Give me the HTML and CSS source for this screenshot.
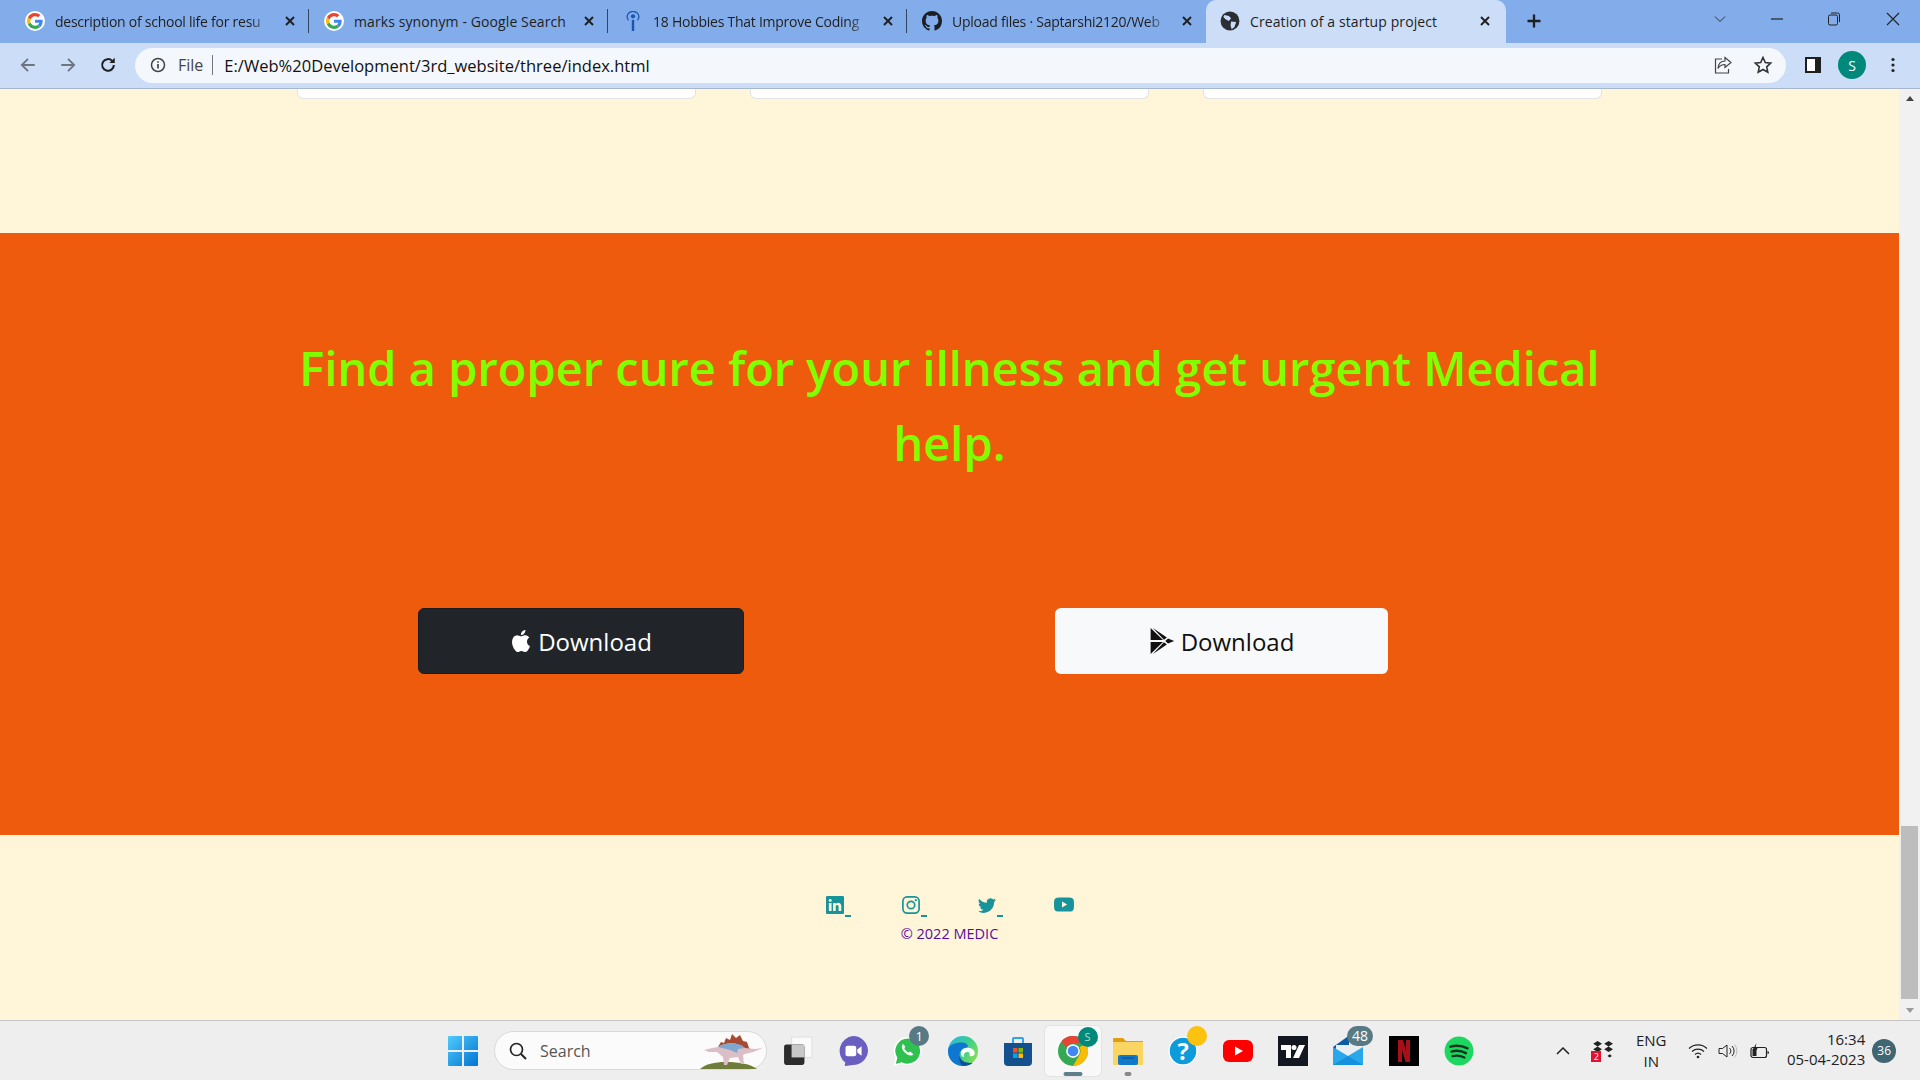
FILE: index.html
```html
<!DOCTYPE html>
<html lang="en">
<head>
  <meta charset="UTF-8">
  <title>Creation of a startup project</title>
  <link rel="stylesheet" href="styles.css">
</head>
<body>
  <svg class="defs" width="0" height="0">
    <symbol id="g-logo" viewBox="-6 -6 60 60">
      <circle cx="24" cy="24" r="30" fill="#fff"/>
      <path fill="#ea4335" d="M24 9.5c3.54 0 6.71 1.22 9.21 3.6l6.85-6.85C35.9 2.38 30.47 0 24 0 14.62 0 6.51 5.38 2.56 13.22l7.98 6.19C12.43 13.72 17.74 9.5 24 9.5z"/>
      <path fill="#4285f4" d="M46.98 24.55c0-1.57-.15-3.09-.38-4.55H24v9.02h12.94c-.58 2.96-2.26 5.48-4.78 7.18l7.73 6c4.51-4.18 7.09-10.36 7.09-17.65z"/>
      <path fill="#fbbc05" d="M10.53 28.59c-.48-1.45-.76-2.99-.76-4.59s.27-3.14.76-4.59l-7.98-6.19C.92 16.46 0 20.12 0 24c0 3.88.92 7.54 2.56 10.78l7.97-6.19z"/>
      <path fill="#34a853" d="M24 48c6.48 0 11.93-2.13 15.89-5.81l-7.73-6c-2.15 1.45-4.92 2.3-8.16 2.3-6.26 0-11.57-4.22-13.47-9.91l-7.98 6.19C6.51 42.62 14.62 48 24 48z"/>
    </symbol>
    <symbol id="x-icon" viewBox="0 0 12 12">
      <path d="M2 2l8 8M10 2l-8 8" stroke="#1f1f1f" stroke-width="1.9" fill="none"/>
    </symbol>
  </svg>

  <div class="tabstrip">
    <div class="tab">
      <svg class="favicon"><use href="#g-logo"/></svg>
      <span class="tab-title">description of school life for resu</span>
      <svg class="tab-close"><use href="#x-icon"/></svg>
    </div>
    <div class="tab">
      <svg class="favicon"><use href="#g-logo"/></svg>
      <span class="tab-title tab-title-full">marks synonym - Google Search</span>
      <svg class="tab-close"><use href="#x-icon"/></svg>
    </div>
    <div class="tab">
      <svg class="favicon" viewBox="0 0 18 18">
        <circle cx="9" cy="4.800" r="1.900" fill="#1a56b0"/>
        <path d="M7.900 8h2.200v10H7.900z" fill="#1a56b0"/>
        <path d="M5 8.500a5.200 5.200 0 0 1 0-6.500M13 8.500a5.200 5.200 0 0 0 0-6.500M5 2a5.500 5.500 0 0 1 8 0" stroke="#1a56b0" stroke-width="1.100" fill="none"/>
      </svg>
      <span class="tab-title">18 Hobbies That Improve Coding</span>
      <svg class="tab-close"><use href="#x-icon"/></svg>
    </div>
    <div class="tab">
      <svg class="favicon" viewBox="0 0 16 16">
        <path fill="#1b1f24" d="M8 0C3.58 0 0 3.58 0 8c0 3.54 2.29 6.53 5.47 7.59.4.07.55-.17.55-.38 0-.19-.01-.82-.01-1.49-2.01.37-2.53-.49-2.69-.94-.09-.23-.48-.94-.82-1.13-.28-.15-.68-.52-.01-.53.63-.01 1.08.58 1.23.82.72 1.21 1.87.87 2.33.66.07-.52.28-.87.51-1.07-1.78-.2-3.64-.89-3.64-3.95 0-.87.31-1.59.82-2.15-.08-.2-.36-1.02.08-2.12 0 0 .67-.21 2.2.82.64-.18 1.32-.27 2-.27.68 0 1.36.09 2 .27 1.53-1.04 2.2-.82 2.2-.82.44 1.1.16 1.92.08 2.12.51.56.82 1.27.82 2.15 0 3.07-1.87 3.75-3.65 3.95.29.25.54.73.54 1.48 0 1.07-.01 1.93-.01 2.2 0 .21.15.46.55.38A8.013 8.013 0 0016 8c0-4.42-3.58-8-8-8z"/>
      </svg>
      <span class="tab-title">Upload files · Saptarshi2120/Web</span>
      <svg class="tab-close"><use href="#x-icon"/></svg>
    </div>
    <div class="tab tab-active">
      <svg class="favicon" viewBox="0 0 18 18">
        <circle cx="9" cy="9" r="8.500" fill="#2b2f33"/>
        <path d="M4 3.500l4 1 2 2-2 2.500-3-1.500-2-2zM10 9.500l4.500.5-1.500 4.500-2.500 2-1-3.500z" fill="#cbddf7"/>
      </svg>
      <span class="tab-title tab-title-full">Creation of a startup project</span>
      <svg class="tab-close"><use href="#x-icon"/></svg>
    </div>
    <svg class="new-tab" viewBox="0 0 16 16"><path d="M8 1.500v13M1.500 8h13" stroke="#1f1f1f" stroke-width="2.300"/></svg>
    <div class="window-controls">
      <svg viewBox="0 0 14 14"><path d="M2 4.500l5 5 5-5" stroke="#333" fill="none"/></svg>
      <svg viewBox="0 0 14 14"><path d="M1 7h12" stroke="#222" stroke-width="1.200"/></svg>
      <svg viewBox="0 0 14 14"><rect x="1.500" y="3" width="9" height="10" rx="1.500" stroke="#222" fill="none"/><path d="M4 1h6.500a2 2 0 0 1 2 2v7" stroke="#222" fill="none"/></svg>
      <svg viewBox="0 0 14 14"><path d="M1 1l12 12M13 1L1 13" stroke="#222" stroke-width="1.100"/></svg>
    </div>
  </div>

  <div class="toolbar">
    <svg class="nav-icon" viewBox="0 0 16 16"><path d="M14 8H2.500M8 2.500L2.500 8 8 13.500" stroke="#6e7580" stroke-width="1.600" fill="none"/></svg>
    <svg class="nav-icon" viewBox="0 0 16 16"><path d="M2 8h11.500M8 2.500L13.500 8 8 13.500" stroke="#6e7580" stroke-width="1.600" fill="none"/></svg>
    <svg class="nav-icon" viewBox="0 0 16 16"><path d="M13.200 8a5.200 5.200 0 1 1-1.500-3.700" stroke="#1f1f1f" stroke-width="1.800" fill="none"/><path d="M14 1.500v4.800H9.200z" fill="#1f1f1f"/></svg>
    <div class="omnibox">
      <svg class="info-icon" viewBox="0 0 16 16"><circle cx="8" cy="8" r="6.500" stroke="#444" stroke-width="1.500" fill="none"/><path d="M8 7v4.500M8 4.300v1.500" stroke="#444" stroke-width="1.700"/></svg>
      <span class="scheme">File</span>
      <span class="url">E:/Web%20Development/3rd_website/three/index.html</span>
      <svg class="omni-action" viewBox="0 0 20 20"><path d="M9 4H2.500v14h13v-4" stroke="#444" stroke-width="1.200" fill="none"/><path d="M12 2.500l6 5-6 5V9.500c-3.500 0-5.500 1.500-7 4 .3-4.500 3-7.500 7-7.500z" stroke="#444" stroke-width="1.200" fill="none"/></svg>
      <svg class="omni-action" viewBox="0 0 20 20"><path d="M10 2.500l2.300 5 5.400.6-4 3.700 1.100 5.400-4.800-2.700-4.800 2.700 1.100-5.400-4-3.700 5.400-.6z" stroke="#333" stroke-width="1.600" fill="none"/></svg>
    </div>
    <svg class="side-panel" viewBox="0 0 18 18"><path d="M1 1h16v16H1z" fill="#1f1f1f"/><path d="M3 3h8v12H3z" fill="#fff"/></svg>
    <span class="avatar">S</span>
    <svg class="kebab" viewBox="0 0 4 16"><circle cx="2" cy="2.500" r="1.600"/><circle cx="2" cy="8" r="1.600"/><circle cx="2" cy="13.500" r="1.600"/></svg>
  </div>

  <div class="viewport">
    <main class="page">
      <div class="cards">
        <div class="card"></div>
        <div class="card"></div>
        <div class="card"></div>
      </div>

      <section class="cta">
        <h1>Find a proper cure for your illness and get urgent Medical help.</h1>
        <div class="cta-buttons">
          <a class="btn btn-dark">
            <svg viewBox="0 0 16 16"><path d="M11.182.008C11.148-.03 9.923.023 8.857 1.18c-1.066 1.156-.902 2.482-.878 2.516.024.034 1.52.087 2.475-1.258.955-1.345.762-2.391.728-2.43Zm3.314 11.733c-.048-.096-2.325-1.234-2.113-3.422.212-2.189 1.675-2.789 1.698-2.854.023-.065-.597-.79-1.254-1.157a3.692 3.692 0 0 0-1.563-.434c-.108-.003-.483-.095-1.254.116-.508.139-1.653.589-1.968.607-.316.018-1.256-.522-2.267-.665-.647-.125-1.333.131-1.824.328-.49.196-1.422.754-2.074 2.237-.652 1.482-.311 3.83-.067 4.56.244.729.625 1.924 1.273 2.796.576.984 1.34 1.667 1.659 1.899.319.232 1.219.386 1.843.067.502-.308 1.408-.485 1.766-.472.357.013 1.061.154 1.782.539.571.197 1.111.115 1.652-.105.541-.221 1.324-1.059 2.238-2.758.347-.79.505-1.217.473-1.282Z"/></svg>
            Download
          </a>
          <a class="btn btn-light">
            <svg viewBox="0 0 16 16"><path d="M1 0v7.400L8.600 7.400zM1 16V8.600L8.600 8.600zM2.400 0l8.600 5.900-1.800 1.300zM2.400 16l8.600-5.900-1.800-1.300zM11.700 6.400L15.500 8l-3.800 1.600L10 8z"/></svg>
            Download
          </a>
        </div>
      </section>

      <footer class="site-footer">
        <div class="socials">
          <a class="social">
            <svg viewBox="0 0 16 16"><path d="M0 1.146C0 .513.526 0 1.175 0h13.65C15.474 0 16 .513 16 1.146v13.708c0 .633-.526 1.146-1.175 1.146H1.175C.526 16 0 15.487 0 14.854V1.146zm4.943 12.248V6.169H2.542v7.225h2.401zm-1.2-8.212c.837 0 1.358-.554 1.358-1.248-.015-.709-.52-1.248-1.342-1.248-.822 0-1.359.54-1.359 1.248 0 .694.521 1.248 1.327 1.248h.016zm4.908 8.212V9.359c0-.216.016-.432.08-.586.173-.431.568-.878 1.232-.878.869 0 1.216.662 1.216 1.634v3.865h2.401V9.250c0-2.220-1.184-3.252-2.764-3.252-1.274 0-1.845.7-2.165 1.193v.025h-.016a5.540 5.540 0 0 1 .016-.025V6.169h-2.400c.03.678 0 7.225 0 7.225h2.400z"/></svg>
            <span class="dash"></span>
          </a>
          <a class="social">
            <svg viewBox="0 0 16 16"><rect x=".8" y=".8" width="14.400" height="14.400" rx="3.800" fill="none" stroke="currentColor" stroke-width="1.500"/><circle cx="8" cy="8" r="3.300" fill="none" stroke="currentColor" stroke-width="1.500"/><circle cx="12.300" cy="3.700" r="1"/></svg>
            <span class="dash"></span>
          </a>
          <a class="social">
            <svg viewBox="0 0 16 16"><path d="M5.026 15c6.038 0 9.341-5.003 9.341-9.334 0-.14 0-.282-.006-.422A6.685 6.685 0 0 0 16 3.542a6.658 6.658 0 0 1-1.889.518 3.301 3.301 0 0 0 1.447-1.817 6.533 6.533 0 0 1-2.087.793A3.286 3.286 0 0 0 7.875 6.030a9.325 9.325 0 0 1-6.767-3.429 3.289 3.289 0 0 0 1.018 4.382A3.323 3.323 0 0 1 .64 6.575v.045a3.288 3.288 0 0 0 2.632 3.218 3.203 3.203 0 0 1-.865.115 3.230 3.230 0 0 1-.614-.057 3.283 3.283 0 0 0 3.067 2.277A6.588 6.588 0 0 1 .78 13.580a6.320 6.320 0 0 1-.78-.045A9.344 9.344 0 0 0 5.026 15z"/></svg>
            <span class="dash"></span>
          </a>
          <a class="social">
            <svg viewBox="0 0 16 16"><path d="M8.051 1.999h.089c.822.003 4.987.033 6.110.335a2.010 2.010 0 0 1 1.415 1.420c.101.38.172.883.22 1.402l.01.104.022.26.008.104c.065.914.073 1.770.074 1.957v.075c-.001.194-.01 1.108-.082 2.060l-.008.105-.009.104c-.05.572-.124 1.140-.235 1.558a2.007 2.007 0 0 1-1.415 1.420c-1.160.312-5.569.334-6.180.335h-.142c-.309 0-1.587-.006-2.927-.052l-.17-.006-.087-.004-.171-.007-.171-.007c-1.110-.049-2.167-.128-2.654-.26a2.007 2.007 0 0 1-1.415-1.419c-.111-.417-.185-.986-.235-1.558L.09 9.820l-.008-.104A31.400 31.400 0 0 1 0 7.680v-.123c.002-.215.01-.958.064-1.778l.007-.103.003-.052.008-.104.022-.26.01-.104c.048-.519.119-1.023.22-1.402a2.007 2.007 0 0 1 1.415-1.420c.487-.13 1.544-.21 2.654-.26l.17-.007.172-.006.086-.003.171-.007A99.788 99.788 0 0 1 7.858 2h.193zM6.400 5.209v4.818l4.157-2.408L6.400 5.209z"/></svg>
          </a>
        </div>
        <p class="copyright">© 2022 MEDIC</p>
      </footer>
    </main>
    <div class="scrollbar">
      <span class="arrow-up"></span>
      <div class="scroll-track"><div class="scroll-thumb"></div></div>
      <span class="arrow-down"></span>
    </div>
  </div>

  <div class="taskbar">
    <svg class="win-logo" viewBox="0 0 30 30">
      <defs><linearGradient id="win-blue" x1="0" y1="0" x2="1" y2="1"><stop offset="0" stop-color="#4fcbfb"/><stop offset="1" stop-color="#0273d4"/></linearGradient></defs>
      <path fill="url(#win-blue)" d="M0 1a1 1 0 0 1 1-1h13v14H0zM16 0h13a1 1 0 0 1 1 1v13H16zM0 16h14v14H1a1 1 0 0 1-1-1zM16 16h14v13a1 1 0 0 1-1 1H16z"/>
    </svg>
    <div class="task-search">
      <svg class="search-icon" viewBox="0 0 18 18"><circle cx="7.500" cy="7.500" r="6" stroke="#222" stroke-width="1.700" fill="none"/><path d="M12 12l5 5" stroke="#222" stroke-width="1.900"/></svg>
      <span>Search</span>
      <svg class="dino" viewBox="0 0 64 36">
        <path d="M0 36c6-5 14-7 26-7 14 0 24 2 31 7z" fill="#6f7d3a"/>
        <path d="M18 14l3-5 3 1 2-5 4 2 2-6 4 4 4-3 3 6 4 1 2 6 5 4H20z" fill="#a84a32"/>
        <path d="M4 17l8-2 6-1c8-5 20-5 27 1l10 1 8-1-10 4-8 2-2 1 1 9h-3l-3-7-8 1-3 7h-3l-1-8-6-5-8 0z" fill="#dcbfc6"/>
        <path d="M18 14c8-5 20-5 27 1l-7 1-1 4-7-3z" fill="#7fa8d0"/>
      </svg>
    </div>
    <div class="task-apps">
      <div class="app">
        <svg viewBox="0 0 28 28"><rect x="8" y="1" width="19" height="19" fill="#fafafa" stroke="#e2e2e2"/><rect x="1" y="8" width="19" height="19" rx="2" fill="#2c2c2c"/><rect x="8" y="8" width="12" height="12" fill="#c8c8c8"/></svg>
      </div>
      <div class="app">
        <svg viewBox="0 0 28 28"><path d="M14 0a14 14 0 0 1 14 14 14 14 0 0 1-14 13l-7 1c-1 0-1-1 0-3A14 14 0 0 1 14 0z" fill="#6a5fc1"/><rect x="7" y="9" width="10" height="10" rx="2" fill="#fff"/><path d="M18 12.500l4-3v9l-4-3z" fill="#fff"/></svg>
      </div>
      <div class="app">
        <svg viewBox="0 0 28 28"><path d="M14 1.500a12.500 12.500 0 0 0-10.700 19L1.500 27l6.700-1.700A12.500 12.500 0 1 0 14 1.500z" fill="#2fc14f" stroke="#fff" stroke-width="1.500"/><path d="M9.500 7.500c-2 1.500-1.500 5 1.500 8s6.500 3.500 8 1.500l-3-2.500-1.500 1c-2-.8-3-2-4-4l1-1.500z" fill="#fff"/></svg>
        <span class="badge badge-round">1</span>
      </div>
      <div class="app">
        <svg viewBox="0 0 28 28">
          <defs><linearGradient id="edge-g" x1="0" y1="0" x2="1" y2=".6"><stop offset="0" stop-color="#27b6e8"/><stop offset=".6" stop-color="#3bcf8e"/><stop offset="1" stop-color="#7fdc55"/></linearGradient></defs>
          <circle cx="14" cy="14" r="14" fill="url(#edge-g)"/>
          <path d="M0 14c0 8 6 14 14 14 4 0 7-1 9-3-6 1-11-1-12-6-1-4 2-8 7-8 2-3-2-5-5-5C7 6 0 8 0 14z" fill="#0f77d0"/>
          <path d="M11 19c1 5 6 7 12 6-3 2-7 3-9 3-3-2-4-6-3-9z" fill="#0c4f96"/>
          <path d="M12 16c0-3 3-5 6-5 4 0 7 2 7 5 0 2-2 3-5 3 1-2 0-4-2-4-2 0-4 2-3 5-2-1-3-2-3-4z" fill="#fff"/>
        </svg>
      </div>
      <div class="app">
        <svg viewBox="0 0 28 30"><path d="M9 7V3a1 1 0 0 1 1-1h8a1 1 0 0 1 1 1v4" stroke="#2ea3e6" stroke-width="2" fill="none"/><path d="M0 7h28v19a4 4 0 0 1-4 4H4a4 4 0 0 1-4-4z" fill="#15508e"/><path d="M9 12h4.500v4.500H9z" fill="#f25022"/><path d="M14.500 12H19v4.500h-4.500z" fill="#7fba00"/><path d="M9 17.500h4.500V22H9z" fill="#00a4ef"/><path d="M14.500 17.500H19V22h-4.500z" fill="#ffb900"/></svg>
      </div>
      <div class="app app-active">
        <svg class="chrome-logo" viewBox="0 0 48 48">
          <circle cx="24" cy="24" r="24" fill="#34a853"/>
          <path d="M24 0a24 24 0 0 1 20.800 12H24a12 12 0 0 0-10.400 6L5.300 8.500A24 24 0 0 1 24 0z" fill="#ea4335"/>
          <path d="M44.800 12A24 24 0 0 1 24 48l10.400-18A12 12 0 0 0 34.400 18z" fill="#fbbc05"/>
          <circle cx="24" cy="24" r="11" fill="#fff"/><circle cx="24" cy="24" r="8.500" fill="#4285f4"/>
        </svg>
        <span class="badge badge-profile">S</span>
        <span class="run-pill"></span>
      </div>
      <div class="app">
        <svg viewBox="0 0 30 28"><path d="M0 2a1 1 0 0 1 1-1h9l3 3h17v6H0z" fill="#dd9e12"/><path d="M0 5h30v22a1 1 0 0 1-1 1H1a1 1 0 0 1-1-1z" fill="#fbd562"/><rect x="5" y="18" width="20" height="10" rx="2" fill="#0f78c8"/><path d="M9 21h12" stroke="#0b4f88" stroke-width="1.200"/></svg>
        <span class="run-dot"></span>
      </div>
      <div class="app">
        <svg viewBox="0 0 28 28"><circle cx="14" cy="14" r="13" fill="#0e9bdc" stroke="#fff" stroke-width="1.200"/><text x="14" y="22" class="help-mark">?</text></svg>
        <span class="badge badge-dot"></span>
      </div>
      <div class="app">
        <svg viewBox="0 0 30 22"><rect width="30" height="22" rx="6" fill="#f00"/><path d="M12 6.500l8 4.500-8 4.500z" fill="#fff"/></svg>
      </div>
      <div class="app">
        <svg viewBox="0 0 30 30"><rect width="30" height="30" fill="#131722"/><path d="M3 9h10v13H8v-8H3z" fill="#fff"/><circle cx="16" cy="11.500" r="2.500" fill="#fff"/><path d="M21 9h6l-6 13h-6z" fill="#fff"/></svg>
      </div>
      <div class="app">
        <svg viewBox="0 0 30 28">
          <path d="M0 10L14 0h2v14L0 22z" fill="#0c5aa6"/><path d="M3 8h24v14H3z" fill="#e9eef2"/>
          <path d="M0 10l15 9 15-9v18H0z" fill="#28a8ea"/><path d="M0 28l15-9 15 9z" fill="#1490df"/>
        </svg>
        <span class="badge badge-count">48</span>
      </div>
      <div class="app">
        <svg viewBox="0 0 30 30"><rect width="30" height="30" fill="#000"/><path d="M9 4h5l3 11V4h4v22h-4.500L13 14v12H9z" fill="#a80f18"/></svg>
      </div>
      <div class="app">
        <svg viewBox="0 0 28 28"><circle cx="14" cy="14" r="13.500" fill="#1ed760"/><path d="M6 10c5-1.500 11-1 16 1.500M7 14.500c4.500-1.200 9.500-.7 13.500 1.500M8 18.800c4-1 7.500-.6 11 1.200" stroke="#12331f" stroke-width="2.200" fill="none" stroke-linecap="round"/></svg>
      </div>
    </div>
    <div class="tray">
      <svg class="tray-chevron" viewBox="0 0 14 8"><path d="M1 7l6-6 6 6" stroke="#222" stroke-width="1.500" fill="none"/></svg>
      <div class="tray-dropbox">
        <svg viewBox="0 0 20 20"><path d="M3 0l4 2.500L3 5-1 2.500zM13 0l4 2.500L13 5 9 2.500zM3 5l4 2.500L3 10-1 7.500zM13 5l4 2.500-4 2.500-4-2.500zM14 12l2 1.500-2 1.500-2-1.500z" fill="#222" transform="translate(3 1)"/></svg>
        <span class="dropbox-count">2</span>
      </div>
      <div class="lang">ENG<br>IN</div>
      <svg class="tray-icon wifi" viewBox="0 0 20 16"><path d="M1 5.500a13 13 0 0 1 18 0M4 8.500a9 9 0 0 1 12 0M7 11.500a4.500 4.500 0 0 1 6 0" stroke="#222" stroke-width="1.200" fill="none"/><circle cx="10" cy="14" r="1.300" fill="#222"/></svg>
      <svg class="tray-icon" viewBox="0 0 20 16"><path d="M1 5.500h3.500L9 2v12l-4.500-3.500H1z" stroke="#222" fill="none"/><path d="M11.500 5a4 4 0 0 1 0 6M14 3a7 7 0 0 1 0 10" stroke="#222" fill="none"/><path d="M16.500 1.500a10 10 0 0 1 0 13" stroke="#bbb" fill="none"/></svg>
      <svg class="tray-icon tray-battery" viewBox="0 0 20 16"><rect x="1" y="4.500" width="15.500" height="10" rx="2" stroke="#222" stroke-width="1.200" fill="none"/><rect x="2.500" y="6" width="4" height="7" fill="#222"/><path d="M17.500 8v3a1.500 1.500 0 0 0 0-3z" fill="#222"/><path d="M6.500 0L3 6h2.500L4.500 10 8 4.500H5.500z" fill="#222"/></svg>
      <div class="clock">16:34<br>05-04-2023</div>
      <span class="notif">36</span>
    </div>
  </div>
</body>
</html>
```

FILE: styles.css
```css
* {
  box-sizing: border-box;
}

html, body {
  margin: 0;
  height: 1080px;
  overflow: hidden;
}

body {
  display: flex;
  flex-direction: column;
  font-family: "Open Sans", "Noto Sans", sans-serif;
  background: #fff6d9;
  color: #1f1f1f;
}

.defs {
  display: none;
}

/* browser chrome */
.tabstrip {
  display: flex;
  align-items: flex-start;
  height: 43px;
  padding-left: 10px;
  background: #83acea;
  flex-shrink: 0;
}

.tab {
  position: relative;
  display: flex;
  align-items: center;
  width: 299px;
  height: 43px;
  padding: 0 13px 1px 15px;
}

.tab::after {
  content: "";
  position: absolute;
  right: 0;
  top: 9px;
  height: 24px;
  width: 1px;
  background: #33475f;
}

.tab:nth-child(4)::after,
.tab-active::after {
  display: none;
}

.tab-active {
  width: 300px;
  height: 43px;
  background: #cbddf7;
  border-radius: 10px 10px 0 0;
  padding-left: 14px;
  padding-right: 15px;
}

.favicon {
  width: 20px;
  height: 20px;
  flex-shrink: 0;
}

.tab-title {
  flex: 1;
  margin-left: 10px;
  font-size: 14px;
  letter-spacing: -0.25px;
  white-space: nowrap;
  overflow: hidden;
  -webkit-mask-image: linear-gradient(to right, #000 90%, transparent 100%);
  mask-image: linear-gradient(to right, #000 90%, transparent 100%);
}

.tab-title-full {
  letter-spacing: 0.1px;
  -webkit-mask-image: none;
  mask-image: none;
}

.tab-close {
  width: 12px;
  height: 12px;
  margin-left: 12px;
  flex-shrink: 0;
}

.new-tab {
  width: 16px;
  height: 16px;
  margin: 13px 0 0 20px;
}

.window-controls {
  display: flex;
  margin-left: auto;
  padding-right: 20px;
  gap: 43px;
  margin-top: 12px;
}

.window-controls svg {
  width: 14px;
  height: 14px;
}

.window-controls svg:last-child {
  margin-left: 2px;
}

.toolbar {
  display: flex;
  align-items: center;
  height: 46px;
  padding: 5px 0 6px 19px;
  background: #cbddf7;
  border-bottom: 1px solid #a9b7cb;
  flex-shrink: 0;
}

.nav-icon {
  width: 18px;
  height: 18px;
  margin-right: 22px;
}

.omnibox {
  display: flex;
  align-items: center;
  width: 1651px;
  height: 35px;
  margin-left: -4px;
  padding: 0 13px 0 15px;
  background: #f4f7fc;
  border-radius: 18px;
}

.info-icon {
  width: 16px;
  height: 16px;
}

.scheme {
  margin-left: 12px;
  padding-right: 9px;
  border-right: 1px solid #777;
  font-size: 16px;
  line-height: 20px;
  color: #444;
}

.url {
  flex: 1;
  margin-left: 11px;
  font-size: 16.500px;
  letter-spacing: 0.02px;
  color: #111;
}

.omni-action {
  width: 20px;
  height: 20px;
  margin-left: 20px;
}

.side-panel {
  width: 18px;
  height: 18px;
  margin-left: 18px;
}

.avatar {
  display: flex;
  align-items: center;
  justify-content: center;
  width: 28px;
  height: 28px;
  margin-left: 16px;
  border-radius: 50%;
  background: #00897b;
  color: #fff;
  font-size: 14px;
}

.kebab {
  width: 4px;
  height: 16px;
  margin-left: 25px;
  fill: #222;
}

/* page */
.viewport {
  display: flex;
  flex: 1;
  min-height: 0;
}

.page {
  flex: 1;
  min-width: 0;
  background: #fff6d9;
  overflow: hidden;
}

.cards {
  display: grid;
  grid-template-columns: repeat(3, 399px);
  gap: 54px;
  justify-content: center;
  height: 144px;
}

.card {
  height: 10px;
  background: #fff;
  border: 1px solid #e3e3e3;
  border-top: 0;
  border-radius: 0 0 6px 6px;
}

.cta {
  height: 602px;
  padding-top: 98px;
  background: #ef5b0c;
}

.cta h1 {
  width: 1340px;
  margin: 0 auto;
  font-size: 47px;
  font-weight: 600;
  line-height: 75px;
  text-align: center;
  color: #7fff00;
}

.cta-buttons {
  display: flex;
  gap: 311px;
  margin: 127px 0 0 418px;
}

.btn {
  display: flex;
  align-items: center;
  justify-content: center;
  gap: 6px;
  height: 66px;
  border-radius: 6px;
  font-size: 24px;
}

.btn svg {
  width: 22px;
  height: 26px;
  fill: currentColor;
}

.btn-dark {
  width: 326px;
  background: #212529;
  border: 1px solid #1a1e21;
  color: #fff;
}

.btn-light {
  width: 333px;
  background: #f8f9fa;
  color: #111;
}

.btn-light svg {
  width: 26px;
  height: 28px;
}

.site-footer {
  padding-top: 60px;
  text-align: center;
}

.socials {
  display: flex;
  justify-content: center;
  gap: 51px;
  color: #17939b;
}

.social {
  display: flex;
  align-items: flex-end;
  width: 25px;
  height: 22px;
}

.social:last-child {
  width: 20px;
}

.social svg {
  width: 18px;
  height: 18px;
  margin-bottom: 3px;
  fill: currentColor;
}

.social:last-child svg {
  width: 20px;
  height: 20px;
  margin-bottom: 2px;
}

.dash {
  width: 6px;
  height: 2px;
  margin-left: 1px;
  background: currentColor;
}

.copyright {
  margin: 7px 0 0;
  font-size: 14.500px;
  line-height: 19px;
  color: #5a0ca0;
}

.scrollbar {
  display: flex;
  flex-direction: column;
  align-items: center;
  width: 21px;
  background: #f1f1f1;
}

.arrow-up,
.arrow-down {
  width: 0;
  height: 0;
  margin: 7px 0;
  border-left: 4.500px solid transparent;
  border-right: 4.500px solid transparent;
}

.arrow-up {
  border-bottom: 5px solid #444;
}

.arrow-down {
  border-top: 5px solid #999;
}

.scroll-track {
  display: flex;
  flex-direction: column;
  justify-content: flex-end;
  flex: 1;
  width: 17px;
  padding-bottom: 2px;
}

.scroll-thumb {
  height: 173px;
  background: #bdbdbd;
}

/* windows taskbar */
.taskbar {
  display: flex;
  align-items: center;
  height: 60px;
  padding-left: 448px;
  background: #eee;
  border-top: 1px solid #c4c4c4;
  flex-shrink: 0;
}

.win-logo {
  width: 30px;
  height: 30px;
}

.task-search {
  display: flex;
  align-items: center;
  position: relative;
  width: 273px;
  height: 39px;
  margin-left: 16px;
  padding-left: 14px;
  background: #fbfbfb;
  border: 1px solid #d9d9d9;
  border-radius: 20px;
  font-size: 16px;
  color: #555;
}

.search-icon {
  width: 18px;
  height: 18px;
  margin-right: 13px;
}

.dino {
  position: absolute;
  right: 2px;
  bottom: 0;
  width: 64px;
  height: 36px;
}

.task-apps {
  display: flex;
  margin-left: 3px;
}

.app {
  position: relative;
  display: flex;
  align-items: center;
  justify-content: center;
  width: 55.100px;
  height: 50px;
}

.app > svg {
  width: 30px;
  height: 30px;
}

.app-active {
  background: #f8f8f8;
  border-radius: 5px;
  box-shadow: 0 0 0 1px #e4e4e4;
}

.help-mark {
  font-size: 22px;
  font-weight: 700;
  text-anchor: middle;
  fill: #fff;
}

.badge {
  position: absolute;
  display: flex;
  align-items: center;
  justify-content: center;
  color: #fff;
  font-size: 13px;
}

.badge-round {
  right: 6px;
  top: 0;
  width: 20px;
  height: 20px;
  border-radius: 50%;
  background: #577a85;
}

.badge-profile {
  right: 3px;
  top: 1px;
  width: 20px;
  height: 20px;
  border-radius: 50%;
  background: #00897b;
  color: #a9e0d6;
  font-size: 11px;
}

.badge-dot {
  right: 4px;
  top: 0;
  width: 20px;
  height: 20px;
  border-radius: 50%;
  background: #fcc20f;
}

.badge-count {
  right: 3px;
  top: 0;
  width: 26px;
  height: 20px;
  border-radius: 10px;
  background: #577a85;
  font-size: 14px;
}

.run-pill,
.run-dot {
  position: absolute;
  bottom: 0;
  left: 50%;
  height: 4px;
  border-radius: 2px;
  background: #5f7f8c;
  transform: translateX(-50%);
}

.run-pill {
  width: 19px;
}

.run-dot {
  width: 7px;
  background: #888;
}

.tray {
  display: flex;
  align-items: center;
  margin-left: 70px;
  font-size: 15px;
  color: #222;
}

.tray-chevron {
  width: 14px;
  height: 8px;
}

.tray-dropbox {
  position: relative;
  width: 22px;
  height: 22px;
  margin-left: 21px;
}

.tray-dropbox svg {
  width: 22px;
  height: 22px;
}

.dropbox-count {
  position: absolute;
  left: 0;
  bottom: 0;
  width: 10px;
  height: 11px;
  background: #e0122d;
  color: #fff;
  font-size: 9px;
  line-height: 11px;
  text-align: center;
}

.lang {
  width: 36px;
  margin-left: 20px;
  line-height: 21px;
  text-align: center;
}

.tray-icon {
  width: 20px;
  height: 16px;
  margin-left: 10px;
}

.wifi {
  margin-left: 19px;
}

.tray-battery {
  margin-left: 12px;
}

.clock {
  width: 100px;
  margin-left: -5px;
  padding-bottom: 3px;
  line-height: 20px;
  text-align: right;
}

.notif {
  display: flex;
  align-items: center;
  justify-content: center;
  width: 24px;
  height: 24px;
  margin-left: 7px;
  border-radius: 50%;
  background: #3f6671;
  color: #fff;
  font-size: 12px;
}
```
